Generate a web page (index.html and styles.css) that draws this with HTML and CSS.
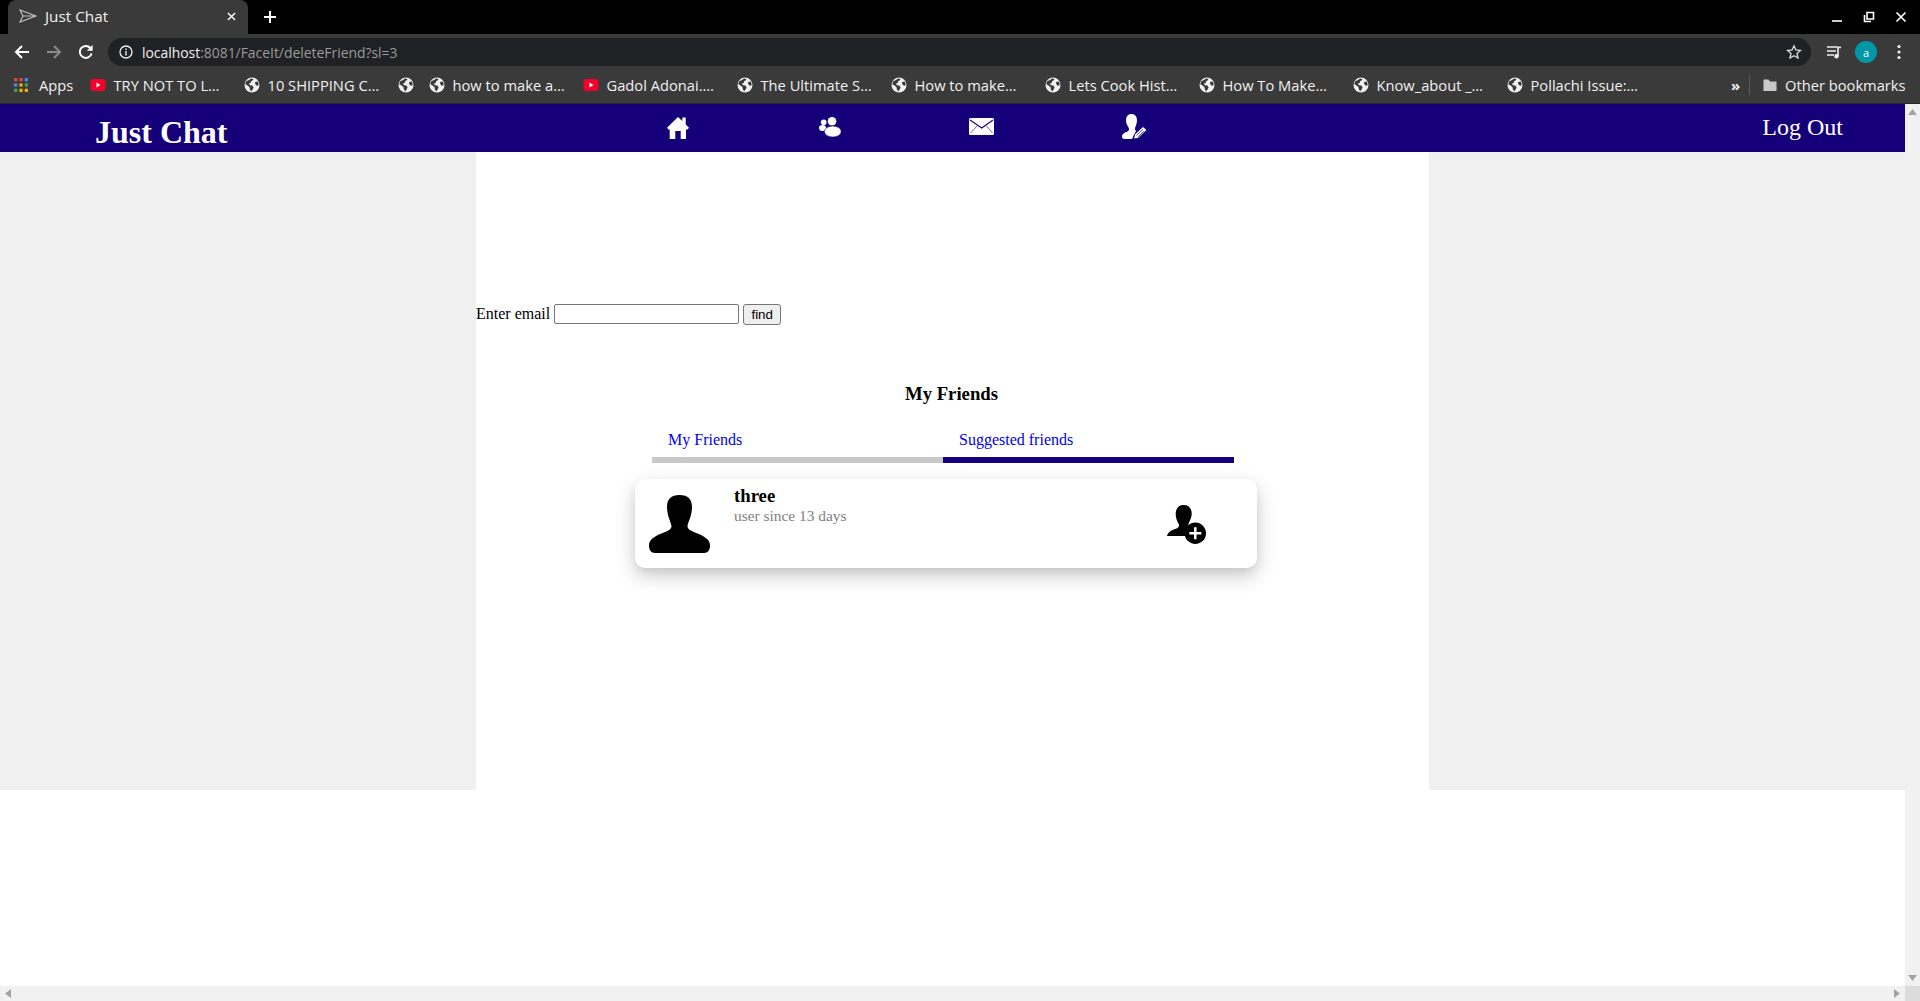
FILE: index.html
```html
<!DOCTYPE html>
<html lang="en">
<head>
<meta charset="utf-8">
<title>Just Chat</title>
<link rel="stylesheet" href="styles.css">
</head>
<body>
<svg class="defs" width="0" height="0" aria-hidden="true">
  <symbol id="globe" viewBox="0 0 16 16">
    <circle cx="8" cy="8" r="7.5" fill="#f1f1f1"/>
    <path d="M2.2 4.2 5 3 7 1.500 9.500 2 8.600 3.600 7 4.200 6.800 6 4.800 6.600 6 8.300 8.400 8.600 9.600 10.400 8.600 12.600 7 14.600 5.800 12 5.400 10 2.800 8 1.200 7.200Z" fill="#3a3a3a"/>
    <path d="M11 5 13.800 4.400 14.800 7.600 13.400 9 11.400 7.400Z" fill="#3a3a3a"/>
  </symbol>
  <symbol id="yt" viewBox="0 0 16 16">
    <rect x="0.5" y="2" width="15" height="12" rx="3" fill="#f4002a"/>
    <path d="M6.500 5.500 10.600 8 6.500 10.500Z" fill="#fff"/>
  </symbol>
</svg>

<header class="tabstrip">
  <div class="tab">
    <svg class="tab-favicon" viewBox="0 0 18 14"><path d="M1 1 17 7 1 13 4 7ZM4 7H17" fill="none" stroke="#bdbdbd" stroke-width="1.2"/></svg>
    <span class="tab-title">Just Chat</span>
    <svg class="tab-close" viewBox="0 0 10 10"><path d="M1 1 9 9M9 1 1 9" stroke="#fff" stroke-width="1.6"/></svg>
  </div>
  <svg class="tab-new" viewBox="0 0 14 14"><path d="M7 1V13M1 7H13" stroke="#fff" stroke-width="2"/></svg>
  <div class="window-controls">
    <svg viewBox="0 0 12 12"><path d="M1 10H11" stroke="#fff" stroke-width="1.6"/></svg>
    <svg viewBox="0 0 12 12"><path d="M4 1.500H10.500V8H4ZM1.500 4V10.500H8" fill="none" stroke="#fff" stroke-width="1.6"/></svg>
    <svg viewBox="0 0 12 12"><path d="M1.500 1.500 10.500 10.500M10.500 1.500 1.500 10.500" stroke="#fff" stroke-width="1.7"/></svg>
  </div>
</header>

<div class="toolbar">
  <svg class="tool" viewBox="0 0 16 16"><path d="M15 8H2M8 2 2 8 8 14" fill="none" stroke="#fff" stroke-width="2"/></svg>
  <svg class="tool" viewBox="0 0 16 16"><path d="M1 8H14M8 2 14 8 8 14" fill="none" stroke="#8a8a8a" stroke-width="2"/></svg>
  <svg class="tool" viewBox="0 0 16 16"><path d="M13.600 9.500A6 6 0 1 1 12.400 4" fill="none" stroke="#fff" stroke-width="2"/><path d="M14.600 1V6.800H8.800Z" fill="#fff"/></svg>
  <div class="omnibox">
    <svg class="info" viewBox="0 0 14 14"><circle cx="7" cy="7" r="6" fill="none" stroke="#f1f1f1" stroke-width="1.3"/><path d="M7 6V10.600M7 3.400V5" stroke="#f1f1f1" stroke-width="1.4"/></svg>
    <span class="url"><span class="url-host">localhost</span>:8081/FaceIt/deleteFriend?sl=3</span>
    <svg class="star" viewBox="0 0 16 16"><path d="M8 1.800 9.900 6 14.400 6.500 11 9.500 12 14 8 11.700 4 14 5 9.500 1.600 6.500 6.100 6Z" fill="none" stroke="#dcdcdc" stroke-width="1.3"/></svg>
  </div>
  <svg class="media" viewBox="0 0 16 14"><path d="M1 2H12M1 6H10M1 10H8" stroke="#eee" stroke-width="1.4"/><path d="M12 3V11" stroke="#eee" stroke-width="1.6"/><path d="M12 2.400H15" stroke="#eee" stroke-width="1.6"/><circle cx="10.500" cy="11.300" r="2.200" fill="#eee"/></svg>
  <span class="avatar">a</span>
  <svg class="kebab" viewBox="0 0 4 16"><circle cx="2" cy="2.500" r="1.600" fill="#f1f1f1"/><circle cx="2" cy="8" r="1.600" fill="#f1f1f1"/><circle cx="2" cy="13.500" r="1.600" fill="#f1f1f1"/></svg>
</div>

<nav class="bookmarks">
  <span class="bm bm-apps">
    <svg class="bm-icon" viewBox="0 0 15 15">
      <rect x="1" y="1" width="3" height="3" fill="#e8453c"/><rect x="6" y="1" width="3" height="3" fill="#e8453c"/><rect x="11" y="1" width="3" height="3" fill="#4a89f3"/>
      <rect x="1" y="6" width="3" height="3" fill="#4a89f3"/><rect x="6" y="6" width="3" height="3" fill="#f4b400"/><rect x="11" y="6" width="3" height="3" fill="#3aa757"/>
      <rect x="1" y="11" width="3" height="3" fill="#3aa757"/><rect x="6" y="11" width="3" height="3" fill="#f4b400"/><rect x="11" y="11" width="3" height="3" fill="#f4b400"/>
    </svg>Apps</span>
  <span class="bm"><svg class="bm-icon"><use href="#yt"/></svg>TRY NOT TO L…</span>
  <span class="bm"><svg class="bm-icon"><use href="#globe"/></svg>10 SHIPPING C…</span>
  <span class="bm bm-bare"><svg class="bm-icon"><use href="#globe"/></svg></span>
  <span class="bm"><svg class="bm-icon"><use href="#globe"/></svg>how to make a…</span>
  <span class="bm"><svg class="bm-icon"><use href="#yt"/></svg>Gadol Adonai.…</span>
  <span class="bm"><svg class="bm-icon"><use href="#globe"/></svg>The Ultimate S…</span>
  <span class="bm"><svg class="bm-icon"><use href="#globe"/></svg>How to make…</span>
  <span class="bm"><svg class="bm-icon"><use href="#globe"/></svg>Lets Cook Hist…</span>
  <span class="bm"><svg class="bm-icon"><use href="#globe"/></svg>How To Make…</span>
  <span class="bm"><svg class="bm-icon"><use href="#globe"/></svg>Know_about _…</span>
  <span class="bm"><svg class="bm-icon"><use href="#globe"/></svg>Pollachi Issue:…</span>
  <span class="bm-more">»</span>
  <span class="bm-sep"></span>
  <span class="bm bm-other">
    <svg class="bm-icon" viewBox="0 0 16 16"><path d="M1.500 2.500H6.500L8 4.500H14.500V14H1.500Z" fill="#c8c8c8"/></svg>Other bookmarks</span>
</nav>

<div class="viewport">
  <div class="page">
    <div class="topnav">
      <span class="brand">Just Chat</span>
      <div class="nav-icons">
        <svg class="icon-home" viewBox="0 0 22 22"><path d="M11 0 15.300 4V.5H18.700V7.500L22 10.800 20.500 12.500H19V22H13.700V14H8.300V22H2.700V12.500H1.500L0 10.800Z" fill="#fff"/></svg>
        <svg class="icon-friends" viewBox="0 0 22 20"><circle cx="4.700" cy="5.300" r="2.800" fill="#fff"/><ellipse cx="3.500" cy="11" rx="3.500" ry="3" fill="#fff"/><circle cx="13" cy="4.300" r="4.300" fill="#fff"/><ellipse cx="13.800" cy="14.500" rx="8.400" ry="5.500" fill="#fff" stroke="#15007a" stroke-width=".6"/></svg>
        <svg class="icon-mail" viewBox="0 0 25 17"><rect width="25" height="17" rx="1.500" fill="#fff"/><path d="M1 2 12.700 10 24 2" fill="none" stroke="#15007a" stroke-width="1.100"/><path d="M8 8 1.500 15M17.500 8 23.500 15" fill="none" stroke="#15007a" stroke-width=".6"/></svg>
        <svg class="icon-editor" viewBox="0 0 25 25"><path d="M9.500 0C13.500 0 15 3 15 6.500 15 10 13 12.500 13 15 13 15.800 13.400 16.500 14 17L10 25H2.500C.5 25 0 23.500 0 22.500 0 20 3 18.500 5.500 17.500 6.500 17 7 16 7 15 7 13 4 10.500 4 6.500 4 2.500 6 0 9.500 0Z" fill="#fff"/><path d="M21 12.500 25 16 16 24.500 11.500 25 12.500 20.500Z" fill="#fff" stroke="#15007a" stroke-width="1"/><path d="M14.300 21.500 20.800 15.500M15.800 23 22.300 17" stroke="#15007a" stroke-width=".7"/></svg>
      </div>
      <span class="logout">Log Out</span>
    </div>
    <div class="stage">
      <main class="content">
        <div class="finder">
          <label class="finder-label">Enter email</label>
          <input class="finder-input" type="text">
          <button class="finder-btn" type="button">find</button>
        </div>
        <h3 class="section-title">My Friends</h3>
        <div class="tabs">
          <a class="tabs-item" href="#">My Friends</a>
          <a class="tabs-item tabs-item-active" href="#">Suggested friends</a>
        </div>
        <article class="card">
          <svg class="card-avatar" viewBox="0 0 61 58"><path d="M30.500 0C39 0 43 4 43 12 43 21 39 27 38.500 31 38.500 34 41 35.500 46 37.500 55 41 61 44 61 50.500 61 55 59 58 55 58H6C2 58 0 55 0 50.500 0 44 6 41 15 37.500 20 35.500 22.500 34 22.500 31 22 27 18 21 18 12 18 4 22 0 30.500 0Z"/></svg>
          <div class="card-text">
            <div class="card-name">three</div>
            <div class="card-since">user since 13 days</div>
          </div>
          <svg class="card-add" viewBox="0 0 40 39"><path d="M16.700 0C22 0 24.700 3.500 24.700 9 24.700 13 22 17 21.500 19L19 31H0C1 27 5 25 9 23.800 11 23 12.500 21.500 12 19.500 10 16 8.700 13 8.700 9 8.700 3.500 11.500 0 16.700 0Z"/><circle cx="28.300" cy="28.300" r="10.700"/><path d="M28.300 22.300V34.300M22.300 28.300H34.300" stroke="#fff" stroke-width="2.500"/></svg>
        </article>
      </main>
    </div>
  </div>
  <div class="vscroll">
    <svg class="arrow" viewBox="0 0 9 6"><path d="M4.500 0 9 6H0Z" fill="#a3a3a3"/></svg>
    <svg class="arrow" viewBox="0 0 9 6"><path d="M0 0H9L4.500 6Z" fill="#a3a3a3"/></svg>
  </div>
</div>
<div class="hscroll">
  <svg class="arrow-h" viewBox="0 0 6 9"><path d="M6 0V9L0 4.500Z" fill="#a3a3a3"/></svg>
  <svg class="arrow-h" viewBox="0 0 6 9"><path d="M0 0V9L6 4.500Z" fill="#a3a3a3"/></svg>
  <span class="scroll-corner"></span>
</div>
</body>
</html>
```

FILE: styles.css
```css
* { box-sizing: border-box; }
html, body { margin: 0; height: 100%; }
body {
  display: flex;
  flex-direction: column;
  height: 100vh;
  overflow: hidden;
  background: #fff;
  color: #000;
  font-family: "Liberation Serif", serif;
  font-size: 16px;
}
.defs { position: absolute; }

/* browser frame */
.tabstrip {
  flex: none;
  display: flex;
  align-items: center;
  height: 34px;
  background: #000;
}
.tab {
  display: flex;
  align-items: center;
  width: 240px;
  height: 34px;
  margin-left: 8px;
  padding: 0 11px 2px;
  background: #3a3a3a;
  border-radius: 8px 8px 0 0;
  color: #f1f1f1;
  font: 15.300px "Open Sans", sans-serif;
}
.tab-favicon { width: 18px; height: 14px; margin-right: 8px; }
.tab-title { flex: 1; }
.tab-close { width: 9px; height: 9px; margin-right: 1px; }
.tab-new { width: 14px; height: 14px; margin-left: 15px; }
.window-controls { display: flex; gap: 20px; margin-left: auto; margin-right: 13px; }
.window-controls svg { width: 12px; height: 12px; }

.toolbar {
  flex: none;
  display: flex;
  align-items: center;
  height: 32px;
  padding-left: 14px;
  padding-top: 4px;
  background: #3a3a3a;
}
.tool { width: 16px; height: 16px; margin-right: 16px; }
.omnibox {
  display: flex;
  align-items: center;
  width: 1703px;
  height: 28px;
  margin-left: -2px;
  padding: 0 9px 0 11px;
  background: #202124;
  border-radius: 14px;
  color: #9a9a9a;
  font: 13.900px "Open Sans", sans-serif;
}
.info { width: 14px; height: 14px; margin-right: 9px; }
.url { flex: 1; }
.url-host { color: #f1f1f1; }
.star { width: 16px; height: 16px; }
.media { width: 16px; height: 14px; margin-left: 15px; }
.avatar {
  display: flex;
  align-items: center;
  justify-content: center;
  width: 22px;
  height: 22px;
  margin-left: 13px;
  border-radius: 50%;
  background: #0097a7;
  color: #fff;
  font: 11px "Open Sans", sans-serif;
}
.kebab { width: 4px; height: 16px; margin-left: 20px; }

.bookmarks {
  flex: none;
  display: flex;
  align-items: center;
  height: 38px;
  padding-left: 13px;
  background: #3a3a3a;
  border-bottom: 1px solid #2a2a2a;
  color: #f1f1f1;
  font: 14.700px "Open Sans", sans-serif;
  white-space: nowrap;
}
.bm { display: flex; align-items: center; width: 154px; }
.bm-icon { flex: none; width: 16px; height: 16px; margin-right: 7.500px; }
.bm-apps { width: 77px; }
.bm-apps .bm-icon { margin-right: 10px; }
.bm-bare { width: 31px; }
.bm-more { margin-left: 70px; width: 12px; font-size: 15px; font-weight: 700; }
.bm-sep { width: 1px; height: 20px; margin: 0 12px 0 6px; background: #5a5a5a; }
.bm-other { width: auto; }
.bm-other .bm-icon { margin-right: 7px; }

/* page */
.viewport { flex: 1; display: flex; min-height: 0; }
.page { flex: 1; min-width: 0; display: flex; flex-direction: column; }
.topnav {
  flex: none;
  display: flex;
  align-items: center;
  height: 48px;
  padding: 0 62px 0 95px;
  background: #15007a;
  color: #fff;
}
.brand { width: 572px; font-size: 32px; font-weight: 700; padding-top: 8px; }
.nav-icons { display: flex; align-items: flex-start; align-self: flex-start; padding-top: 10px; }
.icon-home { flex: none; width: 22px; height: 22px; margin-top: 3px; }
.icon-friends { flex: none; width: 22px; height: 20px; margin: 3px 0 0 130px; }
.icon-mail { flex: none; width: 25px; height: 17px; margin: 4px 0 0 128px; }
.icon-editor { flex: none; width: 25px; height: 25px; margin-left: 128px; }
.logout { margin-left: auto; padding-bottom: 2px; font-size: 24px; }

.stage { flex: none; background: #f0f0f0; }
.content {
  width: 953px;
  height: 638px;
  margin-left: 476px;
  padding-top: 152px;
  background: #fff;
}
.finder { display: flex; align-items: center; height: 20px; }
.finder-label { margin-right: 4px; }
.finder-input {
  width: 185px;
  height: 20px;
  margin: 0 4px 0 0;
  padding: 1px 2px;
  border: 1px solid #767676;
  border-radius: 2px;
  background: #fff;
}
.finder-btn {
  width: 38px;
  height: 21px;
  margin: 0;
  padding: 0;
  border: 1px solid #767676;
  border-radius: 3px;
  background: #efefef;
  color: #000;
  font: 13.333px "Liberation Sans", sans-serif;
}
.section-title {
  margin: 59px 0 0;
  padding-right: 2px;
  font-size: 18.720px;
  line-height: 22px;
  text-align: center;
}
.tabs { display: flex; width: 582px; margin: 15px 0 0 176px; }
.tabs-item {
  flex: 1;
  height: 43px;
  padding: 11px 16px 0;
  border-bottom: 6px solid #c8c8c8;
  color: #00e;
  text-decoration: none;
}
.tabs-item-active { border-bottom-color: #15007a; }
.card {
  display: flex;
  width: 622px;
  height: 89px;
  margin: 16px 0 0 159px;
  background: #fff;
  border-radius: 10px;
  box-shadow: 0 4px 8px rgba(0, 0, 0, .06), 0 8px 20px rgba(0, 0, 0, .2);
}
.card-avatar { flex: none; width: 61px; height: 58px; margin: 16px 0 0 14px; }
.card-text { width: 433px; margin-left: 24px; padding-top: 7px; }
.card-name { font-size: 18.720px; font-weight: 700; line-height: 20px; }
.card-since { color: #808080; font-size: 15.400px; line-height: 19px; }
.card-add { flex: none; width: 40px; height: 39px; margin-top: 26px; }

/* scrollbars */
.vscroll {
  flex: none;
  display: flex;
  flex-direction: column;
  justify-content: space-between;
  align-items: center;
  width: 15px;
  padding: 5px 0;
  background: #f1f1f1;
}
.arrow { width: 9px; height: 6px; }
.hscroll {
  flex: none;
  display: flex;
  align-items: center;
  justify-content: space-between;
  height: 15px;
  padding-left: 5px;
  background: #f1f1f1;
}
.arrow-h { width: 6px; height: 9px; }
.arrow-h + .arrow-h { margin-left: auto; margin-right: 5px; }
.scroll-corner { width: 15px; height: 15px; background: #dcdcdc; }
```
